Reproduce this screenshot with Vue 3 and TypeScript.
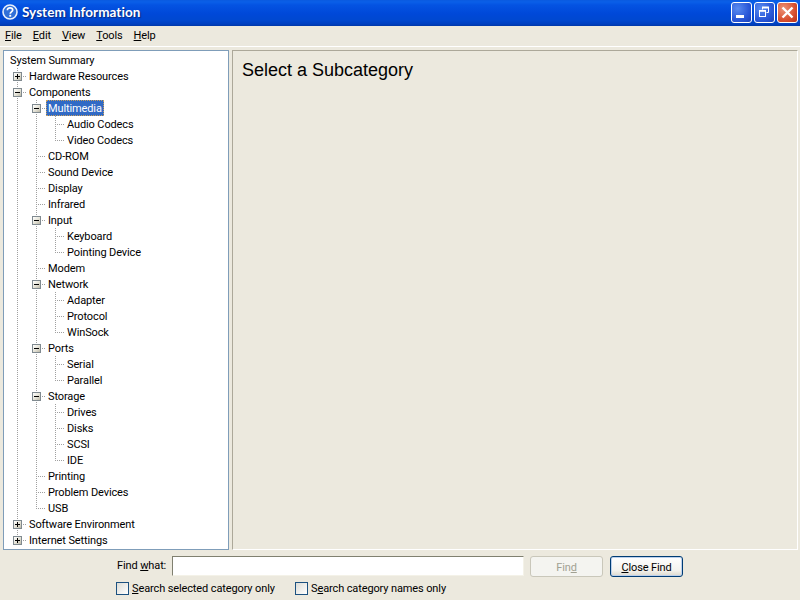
<script setup lang="ts">
import { computed } from 'vue'

interface Node {
  label: string
  children?: Node[]
  expander?: '+' | '-'
}

interface Row {
  label: string
  guides: string[]
  expander?: '+' | '-'
  selected: boolean
}

const tree: Node[] = [
  { label: 'Hardware Resources', expander: '+' },
  {
    label: 'Components',
    expander: '-',
    children: [
      {
        label: 'Multimedia',
        expander: '-',
        children: [{ label: 'Audio Codecs' }, { label: 'Video Codecs' }]
      },
      { label: 'CD-ROM' },
      { label: 'Sound Device' },
      { label: 'Display' },
      { label: 'Infrared' },
      {
        label: 'Input',
        expander: '-',
        children: [{ label: 'Keyboard' }, { label: 'Pointing Device' }]
      },
      { label: 'Modem' },
      {
        label: 'Network',
        expander: '-',
        children: [{ label: 'Adapter' }, { label: 'Protocol' }, { label: 'WinSock' }]
      },
      {
        label: 'Ports',
        expander: '-',
        children: [{ label: 'Serial' }, { label: 'Parallel' }]
      },
      {
        label: 'Storage',
        expander: '-',
        children: [{ label: 'Drives' }, { label: 'Disks' }, { label: 'SCSI' }, { label: 'IDE' }]
      },
      { label: 'Printing' },
      { label: 'Problem Devices' },
      { label: 'USB' }
    ]
  },
  { label: 'Software Environment', expander: '+' },
  { label: 'Internet Settings', expander: '+' }
]

function flatten(nodes: Node[], prefix: string[]): Row[] {
  const out: Row[] = []
  nodes.forEach((n, i) => {
    const last = i === nodes.length - 1
    out.push({
      label: n.label,
      guides: [...prefix, last ? 'elbow' : 'tee'],
      expander: n.expander,
      selected: n.label === 'Multimedia'
    })
    if (n.children) out.push(...flatten(n.children, [...prefix, last ? 'blank' : 'pipe']))
  })
  return out
}

const rows = computed<Row[]>(() => [
  { label: 'System Summary', guides: [], selected: false },
  ...flatten(tree, [])
])
</script>

<template>
  <div class="window">
    <header class="titlebar">
      <svg class="app-icon" width="16" height="16" viewBox="0 0 16 16">
        <circle cx="8" cy="8" r="7" fill="#2f6fd8" stroke="#e8f0fb" stroke-width="1.6" />
        <path d="M5.4 6.2C5.4 4.6 6.6 3.8 8 3.8s2.7.8 2.7 2.2c0 1.9-2.5 1.9-2.5 3.8" fill="none" stroke="#fff" stroke-width="1.7" />
        <rect x="7.3" y="10.8" width="1.9" height="1.9" fill="#fff" />
      </svg>
      <span class="title">System Information</span>
      <div class="controls">
        <button class="ctl">
          <svg width="19" height="19" viewBox="0 0 19 19"><rect x="4" y="12" width="8" height="3" fill="#fff" /></svg>
        </button>
        <button class="ctl">
          <svg width="19" height="19" viewBox="0 0 19 19" fill="none" stroke="#fff">
            <path d="M7.5 6.5V4.5h6v5h-2" stroke-width="1" />
            <path d="M7 4.5h7" stroke-width="2" />
            <rect x="4.5" y="7.5" width="6" height="6" stroke-width="1" />
            <path d="M4 8h7" stroke-width="1.6" />
          </svg>
        </button>
        <button class="ctl close">
          <svg width="19" height="19" viewBox="0 0 19 19"><path d="M4.5 4.5l10 10M14.5 4.5l-10 10" stroke="#fff" stroke-width="2.4" /></svg>
        </button>
      </div>
    </header>

    <nav class="menubar">
      <span class="m"><u>F</u>ile</span>
      <span class="m"><u>E</u>dit</span>
      <span class="m"><u>V</u>iew</span>
      <span class="m"><u>T</u>ools</span>
      <span class="m"><u>H</u>elp</span>
    </nav>

    <main class="panes">
      <div class="tree">
        <div v-for="r in rows" :key="r.label" class="row">
          <span v-for="(g, i) in r.guides" :key="i" class="cell" :class="g">
            <span v-if="i === r.guides.length - 1 && r.expander" class="exp">
              <svg width="9" height="9" viewBox="0 0 9 9">
                <path d="M2 4.5h5" stroke="#000" />
                <path v-if="r.expander === '+'" d="M4.5 2v5" stroke="#000" />
              </svg>
            </span>
          </span>
          <span class="label" :class="{ selected: r.selected }">{{ r.label }}</span>
        </div>
      </div>
      <section class="detail">
        <h1>Select a Subcategory</h1>
      </section>
    </main>

    <footer class="find">
      <div class="find-row">
        <label class="find-label">Find <u>w</u>hat:</label>
        <input class="find-input" type="text" />
        <button class="btn disabled">Fin<u>d</u></button>
        <button class="btn default"><u>C</u>lose Find</button>
      </div>
      <div class="check-row">
        <span class="check"><span class="box"></span><span class="check-text"><u>S</u>earch selected category only</span></span>
        <span class="check"><span class="box"></span><span class="check-text">S<u>e</u>arch category names only</span></span>
      </div>
    </footer>
  </div>
</template>

<style>
html, body { margin: 0; padding: 0; overflow: hidden; }
</style>

<style scoped>
.window {
  width: 800px;
  height: 600px;
  background: #ece9de;
  display: flex;
  flex-direction: column;
  font-family: "Roboto", sans-serif;
  font-size: 11px;
  letter-spacing: -0.12px;
  color: #000;
  overflow: hidden;
}
u { text-underline-offset: 1px; }
.titlebar {
  height: 26px;
  flex: none;
  display: flex;
  align-items: center;
  padding: 0 2px 2px 2px;
  box-sizing: border-box;
  background: linear-gradient(180deg, #0a5ae0 0, #0a5fe8 2px, #0453e2 5px, #0048d8 14px, #0048d0 20px, #0040c0 24px, #0038a8 26px);
}
.app-icon { flex: none; margin-right: 4px; }
.title {
  color: #fff;
  font-family: "Lato", sans-serif;
  font-weight: 700;
  font-size: 13.5px;
  letter-spacing: 0.05px;
  text-shadow: 1px 1px 1px #0a2a80;
}
.controls { margin-left: auto; display: flex; gap: 2px; }
.ctl {
  width: 21px;
  height: 21px;
  padding: 0;
  border: 1px solid #fff;
  border-radius: 3px;
  background: radial-gradient(circle at 30% 30%, #5a8cf0, #2a58d8 60%, #1a40b8);
  display: flex;
  align-items: center;
  justify-content: center;
}
.ctl.close { background: radial-gradient(circle at 30% 30%, #ec9478, #d85030 60%, #b83018); }
.menubar {
  height: 20px;
  flex: none;
  display: flex;
  align-items: center;
  border-bottom: 1px solid #fff;
  box-sizing: content-box;
}
.m { padding: 0 5px 2px; margin-right: 1px; }
.panes {
  flex: none;
  height: 500px;
  margin-top: 3px;
  padding: 0 3px;
  display: flex;
  gap: 3px;
}
.tree {
  width: 226px;
  flex: none;
  box-sizing: border-box;
  border: 1px solid #7f9db9;
  background: #fff;
  padding: 1px 0 0 4px;
  overflow: hidden;
}
.row { height: 16px; display: flex; align-items: stretch; line-height: 18px; white-space: nowrap; }
.cell {
  width: 19px;
  flex: none;
  display: flex;
  align-items: center;
  background-repeat: no-repeat;
}
.pipe {
  background-image: repeating-linear-gradient(180deg, #a0a0a0 0 1px, transparent 1px 2px);
  background-size: 1px 16px;
  background-position: 9px 0;
}
.tee, .elbow {
  background-image:
    repeating-linear-gradient(90deg, #a0a0a0 0 1px, transparent 1px 2px),
    repeating-linear-gradient(180deg, #a0a0a0 0 1px, transparent 1px 2px);
  background-size: 10px 1px, 1px 16px;
  background-position: 9px 8px, 9px 0;
}
.elbow { background-size: 10px 1px, 1px 9px; }
.exp {
  width: 9px;
  height: 9px;
  margin-left: 5px;
  box-sizing: border-box;
  border: 1px solid #808a90;
  background: linear-gradient(135deg, #fff, #e4e2d6 55%, #bdb9a8);
  display: flex;
  align-items: center;
  justify-content: center;
}
.exp svg { flex: none; margin: -1px; }
.label { padding: 0 2px; height: 16px; }
.label.selected {
  background: #316ac5;
  color: #fff;
  outline: 1px dotted #c8a060;
  outline-offset: -1px;
}
.detail {
  flex: none;
  width: 566px;
  height: 500px;
  box-sizing: border-box;
  border: 1px solid;
  border-color: #aca899 #fff #fff #aca899;
  padding: 9px 9px;
}
h1 {
  margin: 0;
  font-family: "Liberation Sans", sans-serif;
  font-weight: 400;
  font-size: 18px;
  letter-spacing: 0;
  line-height: 20px;
}
.find { flex: none; padding: 6px 0 0 116px; }
.find-row { display: flex; align-items: flex-start; }
.find-label { width: 56px; line-height: 20px; padding-left: 1px; box-sizing: border-box; }
.find-input {
  width: 352px;
  height: 20px;
  box-sizing: border-box;
  border: 1px solid;
  border-color: #808070 #f4f2e8 #f4f2e8 #808070;
  background: #fff;
  padding: 0;
  margin: 0 6px 0 0;
}
.btn {
  width: 73px;
  height: 21px;
  padding: 2px 0 0;
  margin-right: 7px;
  font: inherit;
  letter-spacing: inherit;
  border-radius: 3px;
  box-sizing: border-box;
}
.btn.disabled { background: #f4f4f0; border: 1px solid #c9c7ba; color: #a1a192; }
.btn.default {
  background: linear-gradient(180deg, #fff, #f4f3ee 70%, #dcd8cc);
  border: 1px solid #003c74;
  box-shadow: inset 0 0 0 1px #bcd0ec;
  color: #000;
}
.check-row { display: flex; margin-top: 4px; height: 14px; }
.check { display: flex; align-items: center; gap: 3px; width: 179px; line-height: 14px; }
.check-text { padding-top: 2px; }
.box {
  width: 13px;
  height: 13px;
  box-sizing: border-box;
  border: 1px solid #1c5180;
  background: linear-gradient(135deg, #dcdcd6, #fff);
  flex: none;
}
</style>
